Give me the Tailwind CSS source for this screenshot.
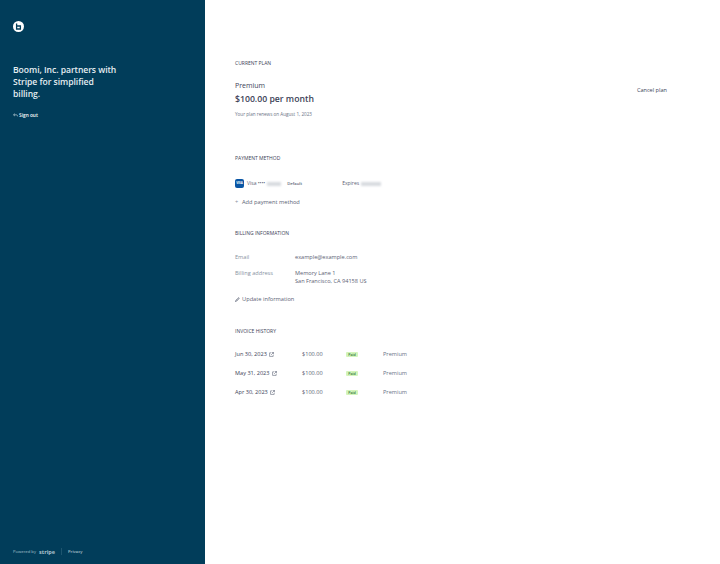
<!DOCTYPE html>
<html lang="en">
<head>
  <meta charset="UTF-8">
  <title>Billing</title>
  <script src="https://cdn.jsdelivr.net/npm/@tailwindcss/browser@4"></script>
</head>
<body class="font-['Open_Sans',sans-serif] bg-white">
  <div class="flex h-[564px] w-[720px] overflow-hidden">
    <aside class="w-[205px] shrink-0 bg-[#013d5a] flex flex-col px-[13px] text-white">
      <div class="mt-[21px] w-[11px] h-[11px] rounded-full bg-white flex items-center justify-center">
        <svg width="7" height="7" viewBox="0 0 7 7" fill="none" stroke="#013d5a" stroke-width="1.3"><path d="M1.6 0.4V6H5.4V3H1.6"/></svg>
      </div>
      <h1 class="mt-[32px] text-[8.6px] leading-[12px] font-semibold tracking-[-0.05px] text-[#e6eef2] w-[106px]">Boomi, Inc. partners with Stripe for simplified billing.</h1>
      <div class="mt-[11px] flex items-center gap-[1px] text-[4.8px] leading-[8px] font-semibold">
        <svg width="5" height="5" viewBox="0 0 6 6" fill="none" stroke="#e6eef2" stroke-width="0.7"><path d="M2.2 0.8 0.7 2.2 2.2 3.6M0.7 2.2H4.2Q5.4 2.2 5.4 4"/></svg>
        <span>Sign out</span>
      </div>
      <div class="mt-auto mb-[9px] flex items-center text-[4.2px] leading-[6px] text-[#a9c0cc]">
        <span>Powered by</span>
        <span class="ml-[3px] text-[5.5px] font-bold">stripe</span>
        <span class="mx-[6px] h-[7px] w-px bg-[#1d556f]"></span>
        <span class="font-semibold">Privacy</span>
      </div>
    </aside>
    <main class="flex-1 pl-[30px] pr-[53px] text-[#5b6275]">
      <section class="pt-[60px]">
        <h2 class="text-[5px] leading-[7px] uppercase font-medium text-[#3c4257]">Current plan</h2>
        <div class="mt-[13px] flex justify-between">
          <div>
            <div class="text-[7px] leading-[11px] text-[#3c4257]">Premium</div>
            <div class="mt-[2px] text-[8.7px] leading-[13px] font-semibold text-[#3c4257]">$100.00 per month</div>
            <div class="mt-[5px] text-[4.6px] leading-[7px] text-[#697386]">Your plan renews on August 1, 2023</div>
          </div>
          <button class="self-start mt-[6px] text-[5.6px] leading-[8px] text-[#3c4257]">Cancel plan</button>
        </div>
      </section>
      <section class="mt-[37px]">
        <h2 class="text-[5px] leading-[7px] uppercase font-medium text-[#3c4257]">Payment method</h2>
        <div class="mt-[17px] flex items-center h-[9px] text-[5px] leading-[9px]">
          <span class="w-[9px] h-[9px] rounded-[2px] bg-[#0a56a5] flex items-center justify-center text-white text-[3px] font-bold">VISA</span>
          <span class="ml-[3px]">Visa •••• </span>
          <span class="ml-[2px] w-[14px] h-[4px] bg-[#d8dbe0] blur-[1px]"></span>
          <span class="ml-[6px] text-[4.2px] font-semibold">Default</span>
          <span class="ml-[40px]">Expires</span>
          <span class="ml-[2px] w-[20px] h-[4px] bg-[#d8dbe0] blur-[1px]"></span>
        </div>
        <div class="mt-[10px] flex items-center text-[5.7px] leading-[8px]">
          <span class="w-[7px] text-[#8792a2]">+</span>
          <span>Add payment method</span>
        </div>
      </section>
      <section class="mt-[24px]">
        <h2 class="text-[5px] leading-[7px] uppercase font-medium text-[#3c4257]">Billing information</h2>
        <dl class="mt-[16px] grid grid-cols-[60px_1fr] text-[5.6px] leading-[8px]">
          <dt class="text-[#8792a2]">Email</dt>
          <dd>example@example.com</dd>
          <dt class="mt-[8px] text-[#8792a2]">Billing address</dt>
          <dd class="mt-[8px]">Memory Lane 1<br>San Francisco, CA 94158 US</dd>
        </dl>
        <div class="mt-[10px] flex items-center text-[5.7px] leading-[8px]">
          <svg class="w-[5px] h-[5px] mr-[2px]" viewBox="0 0 6 6" fill="none" stroke="#5b6275" stroke-width="0.9"><path d="M0.6 5.4 1 4 4.6 0.8 5.2 1.4 2 4.9Z"/></svg>
          <span>Update information</span>
        </div>
      </section>
      <section class="mt-[25px]">
        <h2 class="text-[5px] leading-[7px] uppercase font-medium text-[#3c4257]">Invoice history</h2>
        <div class="mt-[15px] flex flex-col gap-[11px] text-[5.6px] leading-[8px]">
          <div class="grid grid-cols-[67px_44px_37px_1fr] items-center">
            <span class="flex items-center gap-[2px] font-medium text-[#3c4257]">Jun 30, 2023 <svg class="w-[5px] h-[5px]" viewBox="0 0 6 6" fill="none" stroke="#5b6275" stroke-width="0.7"><path d="M2.4 1H0.7V5.3H5V3.6M3.2 0.6H5.4V2.8M5.4 0.6 2.6 3.4"/></svg></span>
            <span>$100.00</span>
            <span class="w-[12px] h-[5px] mt-[1px] rounded-[1px] bg-[#d3f5bb] text-[#2f6b3a] text-[3.6px] leading-[5px] font-semibold text-center">Paid</span>
            <span class="text-[#697386]">Premium</span>
          </div>
          <div class="grid grid-cols-[67px_44px_37px_1fr] items-center">
            <span class="flex items-center gap-[2px] font-medium text-[#3c4257]">May 31, 2023 <svg class="w-[5px] h-[5px]" viewBox="0 0 6 6" fill="none" stroke="#5b6275" stroke-width="0.7"><path d="M2.4 1H0.7V5.3H5V3.6M3.2 0.6H5.4V2.8M5.4 0.6 2.6 3.4"/></svg></span>
            <span>$100.00</span>
            <span class="w-[12px] h-[5px] mt-[1px] rounded-[1px] bg-[#d3f5bb] text-[#2f6b3a] text-[3.6px] leading-[5px] font-semibold text-center">Paid</span>
            <span class="text-[#697386]">Premium</span>
          </div>
          <div class="grid grid-cols-[67px_44px_37px_1fr] items-center">
            <span class="flex items-center gap-[2px] font-medium text-[#3c4257]">Apr 30, 2023 <svg class="w-[5px] h-[5px]" viewBox="0 0 6 6" fill="none" stroke="#5b6275" stroke-width="0.7"><path d="M2.4 1H0.7V5.3H5V3.6M3.2 0.6H5.4V2.8M5.4 0.6 2.6 3.4"/></svg></span>
            <span>$100.00</span>
            <span class="w-[12px] h-[5px] mt-[1px] rounded-[1px] bg-[#d3f5bb] text-[#2f6b3a] text-[3.6px] leading-[5px] font-semibold text-center">Paid</span>
            <span class="text-[#697386]">Premium</span>
          </div>
        </div>
      </section>
    </main>
  </div>
</body>
</html>
